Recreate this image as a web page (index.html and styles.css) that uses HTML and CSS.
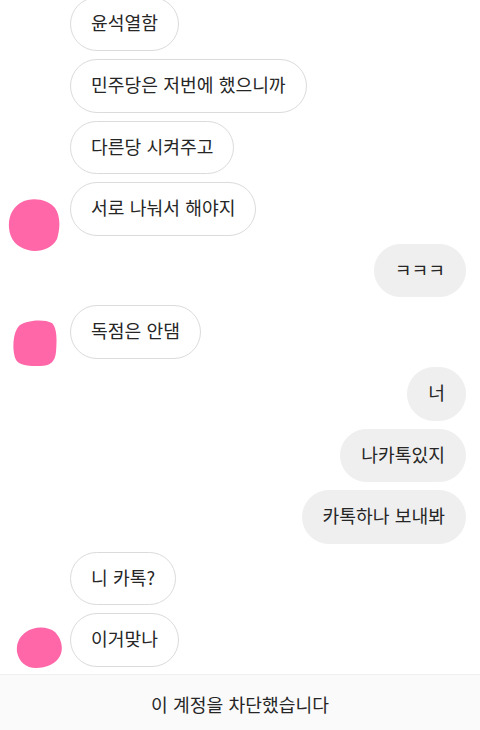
FILE: index.html
```html
<!DOCTYPE html>
<html>
	<head>
		<meta charset="UTF-8">
		<title>Direct</title>
		<link rel="stylesheet" href="styles.css">
	</head>
	<body>
		<div class="screen">
			<div class="thread">
				<div class="row in">
					<div class="avatar"></div>
					<div class="bubble">윤석열함</div>
				</div>
				<div class="row in">
					<div class="avatar"></div>
					<div class="bubble">민주당은 저번에 했으니까</div>
				</div>
				<div class="row in">
					<div class="avatar"></div>
					<div class="bubble">다른당 시켜주고</div>
				</div>
				<div class="row in">
					<div class="avatar">
						<svg class="blob blob-a" width="52" height="54" viewBox="0 0 52 54"><path d="M14 4 C24 -1 40 1 47 10 C53 18 52 32 49 41 C44 51 30 55 20 52 C9 49 2 42 1 30 C0 18 5 9 14 4Z"/></svg>
					</div>
					<div class="bubble">서로 나눠서 해야지</div>
				</div>
				<div class="row out">
					<div class="bubble">ㅋㅋㅋ</div>
				</div>
				<div class="row in">
					<div class="avatar">
						<svg class="blob blob-b" width="45" height="46" viewBox="0 0 45 46"><path d="M8 5 C16 0 32 -1 40 3 C45 8 45 20 44 32 C43 42 38 46 28 46 C18 46 8 46 4 40 C0 32 0 12 8 5Z"/></svg>
					</div>
					<div class="bubble">독점은 안댐</div>
				</div>
				<div class="row out">
					<div class="bubble">너</div>
				</div>
				<div class="row out">
					<div class="bubble">나카톡있지</div>
				</div>
				<div class="row out">
					<div class="bubble">카톡하나 보내봐</div>
				</div>
				<div class="row in">
					<div class="avatar"></div>
					<div class="bubble">니 카톡?</div>
				</div>
				<div class="row in">
					<div class="avatar">
						<svg class="blob blob-c" width="47" height="42" viewBox="0 0 47 42"><path d="M10 6 C18 0 32 0 39 6 C45 12 48 22 44 30 C40 38 30 42 20 42 C10 42 3 36 1 26 C0 17 4 10 10 6Z"/></svg>
					</div>
					<div class="bubble">이거맞나</div>
				</div>
			</div>
			<div class="blocked">이 계정을 차단했습니다</div>
		</div>
	</body>
</html>
```

FILE: styles.css
```css
*{
	margin: 0;
	padding: 0;
	box-sizing: border-box;
}
body{
	background: #fff;
	font-family: "Noto Sans CJK KR", "Noto Sans", sans-serif;
	color: #262626;
}
.screen{
	width: 480px;
	height: 730px;
	display: flex;
	flex-direction: column;
}
/*대화*/
.thread{
	flex: 1;
	min-height: 0;
	overflow: hidden;
	display: flex;
	flex-direction: column;
	justify-content: flex-end;
	gap: 8px;
	padding-bottom: 7px;
}
.row{
	display: flex;
	flex: none;
}
.row.out{
	justify-content: flex-end;
	padding-right: 14px;
}
.avatar{
	width: 70px;
	height: 53px;
	flex: none;
	align-self: flex-start;
}
.blob{
	display: block;
	fill: #ff67a9;
}
.blob-a{
	margin: 16px 0 0 8px;
}
.blob-b{
	margin: 15px 0 0 12px;
}
.blob-c{
	margin: 13px 0 0 16px;
}
.bubble{
	font-size: 18.2px;
	line-height: 21.6px;
	word-spacing: 1.2px;
	padding: 14px 20px 16px;
	border: 1px solid #dbdbdb;
	border-radius: 27px;
	background: #fff;
	white-space: nowrap;
}
.out .bubble{
	background: #efefef;
	border-color: #efefef;
}
/*차단*/
.blocked{
	flex: none;
	height: 56px;
	background: #fafafa;
	border-top: 1px solid #efefef;
	text-align: center;
	font-size: 18.2px;
	line-height: 21.6px;
	word-spacing: 1.2px;
	padding-top: 19px;
}
```
